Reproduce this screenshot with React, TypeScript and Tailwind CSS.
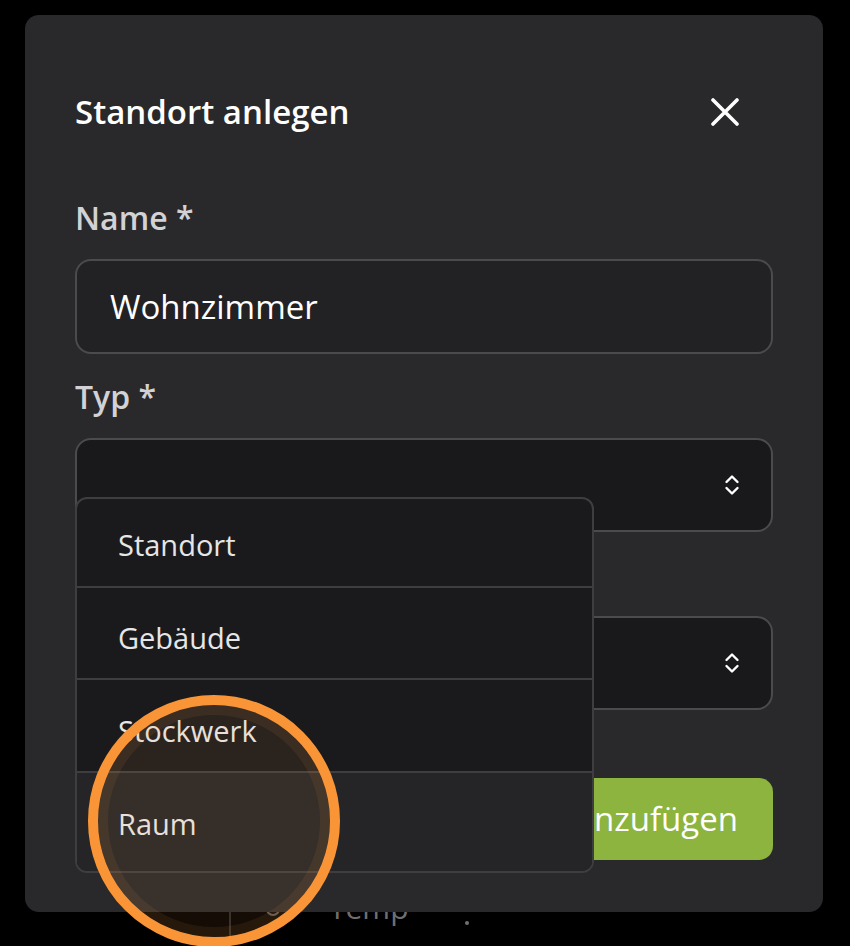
import React from "react";

const font = { fontFamily: '"Open Sans", "Noto Sans", sans-serif' };

const Chevrons: React.FC = () => (
  <svg width="16" height="22" viewBox="0 0 16 22" fill="none" stroke="white" strokeWidth="2.4" strokeLinecap="round" strokeLinejoin="round">
    <path d="M2.5 8 L8 2.5 L13.5 8" />
    <path d="M2.5 14 L8 19.5 L13.5 14" />
  </svg>
);

const Field: React.FC<{ label: string; children: React.ReactNode }> = ({ label, children }) => (
  <div className="flex flex-col gap-[23px]">
    <label className="text-[32px] leading-[36px] font-semibold text-[#d2d2d6]">{label}</label>
    {children}
  </div>
);

const SelectBox: React.FC = () => (
  <div className="h-[94px] rounded-[16px] border-2 border-[#4b4b4f] bg-[#19191b] flex items-center justify-end pr-[31px]">
    <Chevrons />
  </div>
);

const options = [
  { label: "Standort", h: "h-[88px] pt-[4px]", active: false },
  { label: "Gebäude", h: "h-[93px] pt-[10px]", active: false },
  { label: "Stockwerk", h: "h-[94px] pt-[10px]", active: false },
  { label: "Raum", h: "h-[101px] pt-[4px]", active: true },
];

export default function App() {
  return (
    <div className="relative w-[850px] h-[946px] bg-black overflow-hidden" style={font}>
      <div className="pt-[15px] pl-[25px]">
        <div className="relative z-10 w-[798px] h-[897px] bg-[#29292b] rounded-[14px] px-[50px] pt-[77px] flex flex-col">
          <div className="flex items-center justify-between h-[40px]">
            <h2 className="text-[33px] leading-[40px] font-semibold text-white">Standort anlegen</h2>
            <svg width="28" height="28" viewBox="0 0 28 28" className="mr-[34px]" stroke="white" strokeWidth="3.6" strokeLinecap="round">
              <path d="M2 2 L26 26 M26 2 L2 26" />
            </svg>
          </div>

          <div className="mt-[68px] flex flex-col gap-[25px]">
            <Field label="Name *">
              <div className="h-[95px] rounded-[16px] border-2 border-[#4b4b4f] bg-[#222224] flex items-center pl-[33px] text-[33px] text-white">
                Wohnzimmer
              </div>
            </Field>
            <Field label="Typ *">
              <SelectBox />
            </Field>
            <Field label="Übergeordnet">
              <SelectBox />
            </Field>
          </div>

          <div className="mt-[68px] flex justify-end">
            <button className="h-[82px] rounded-[14px] bg-[#8cb43e] px-[35px] text-[33px] text-white">Hinzufügen</button>
          </div>

          {/* open select menu */}
          <div className="absolute left-[50px] top-[482px] w-[519px] h-[376px] rounded-[12px] border-2 border-[#3e3e41] bg-[#1a1a1c] overflow-hidden flex flex-col">
            {options.map((o, i) => (
              <div
                key={o.label}
                className={`${o.h} flex items-center pl-[41px] text-[29px] text-[#e6e6e6] ${i > 0 ? "border-t-2 border-[#3e3e41]" : ""} ${o.active ? "bg-[#252527]" : ""}`}
              >
                {o.label}
              </div>
            ))}
          </div>
        </div>
      </div>

      {/* page content behind the dialog */}
      <div className="h-[34px] overflow-hidden flex items-start">
        <div className="ml-[229px] h-full border-l-2 border-[#2a2a2a]" />
        <div className="ml-[35px] -mt-[10px] w-[14px] h-[14px] rounded-full border-2 border-[#555]" />
        <div className="ml-[49px] -mt-[24px] text-[30px] leading-[40px] text-[#6f6f6f]">Temp</div>
        <div className="ml-[56px] mt-[9px] w-[4px] h-[4px] rounded-full bg-[#6f6f6f]" />
      </div>

      {/* touch indicator */}
      <div className="absolute left-[88px] top-[695px] z-20 w-[252px] h-[252px] rounded-full border-[10px] border-[#fa9537] bg-[rgba(255,150,60,0.08)] shadow-[inset_0_0_0_10px_rgba(255,160,80,0.08)]" />
    </div>
  );
}
